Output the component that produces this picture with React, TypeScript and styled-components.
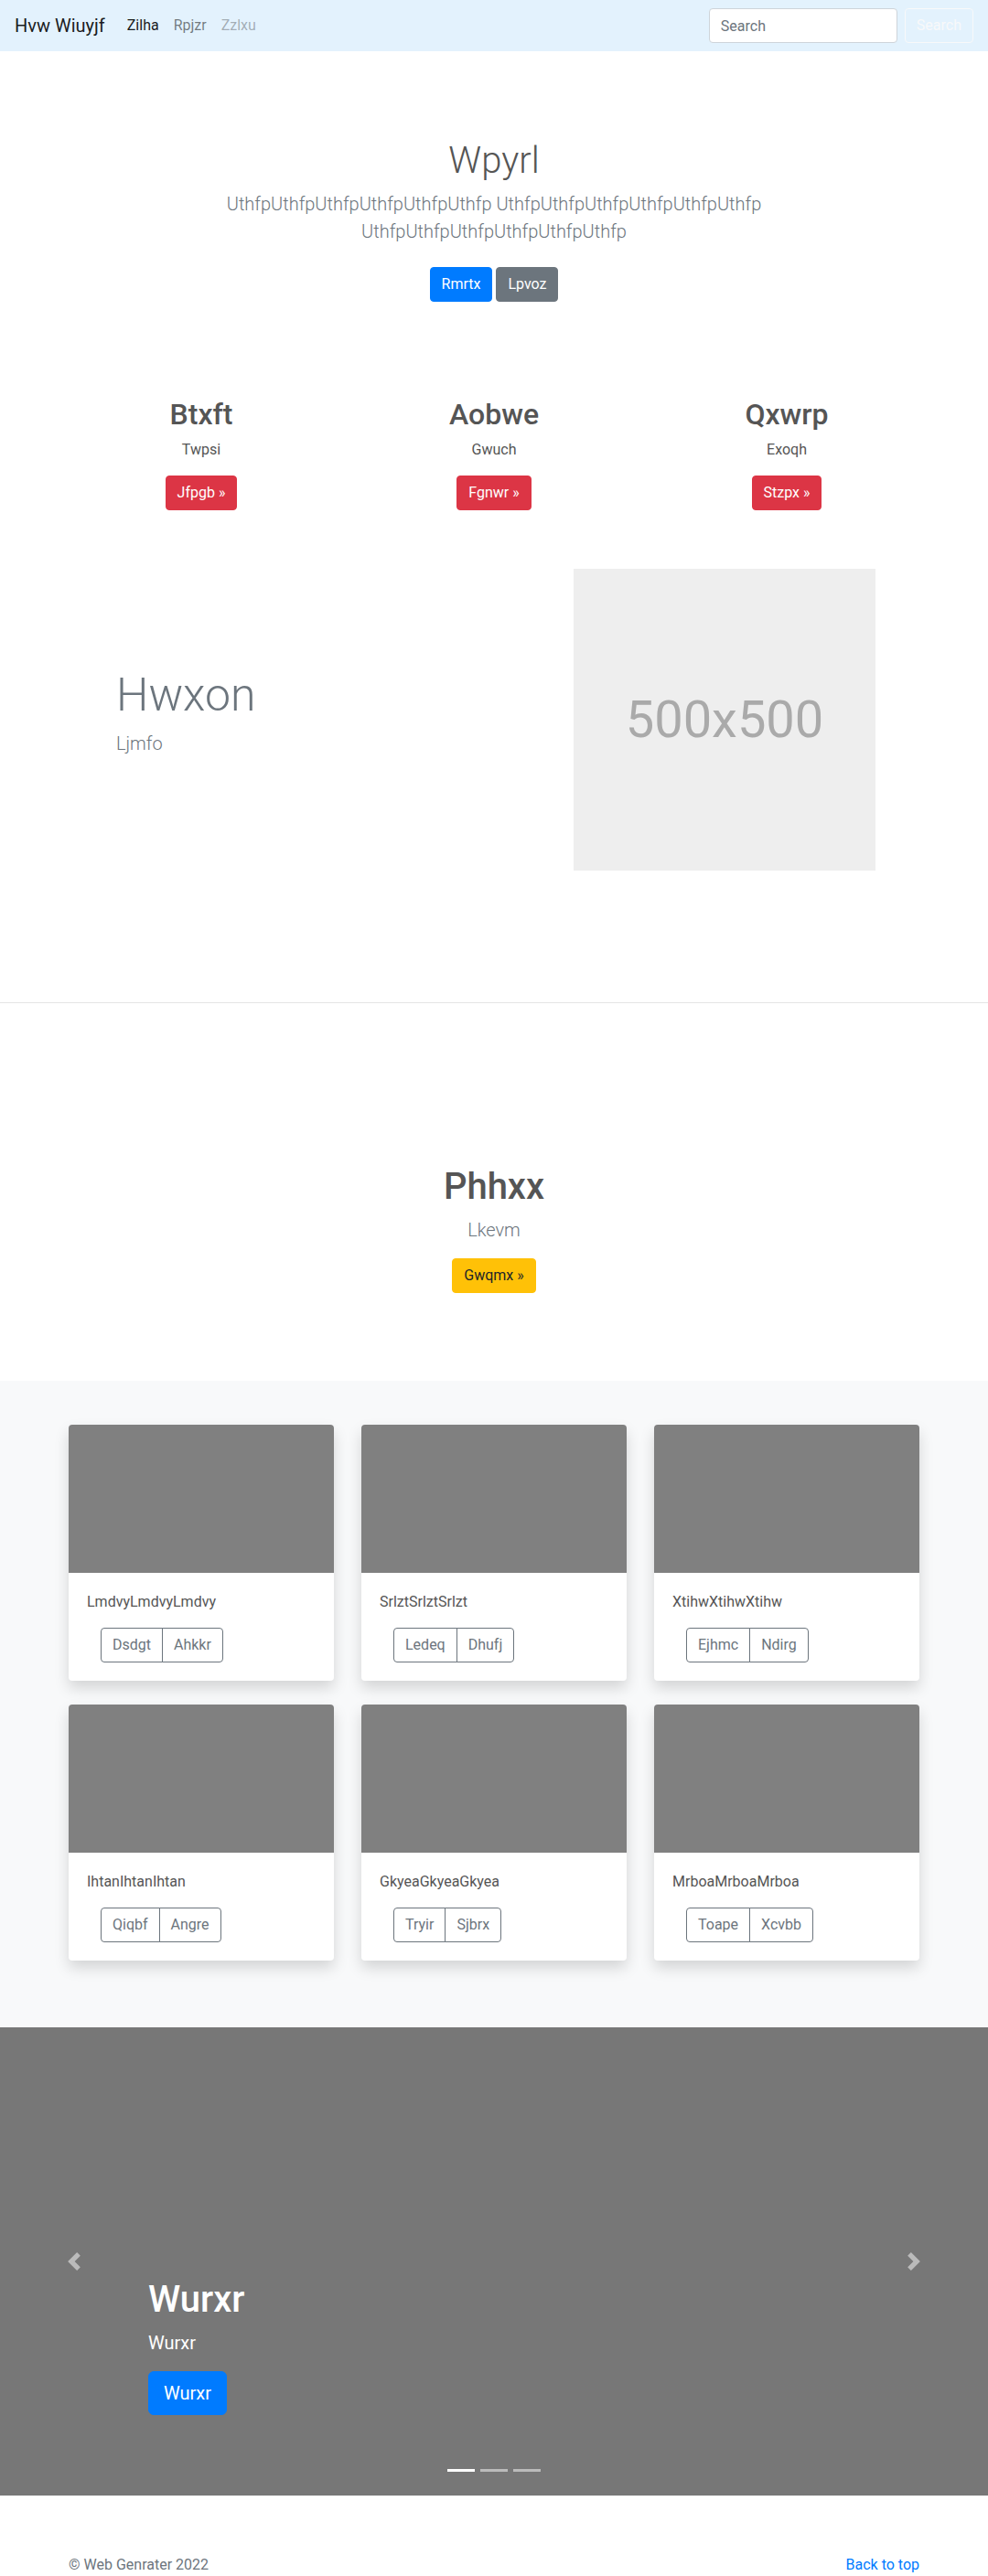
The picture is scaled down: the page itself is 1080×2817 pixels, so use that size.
import React from "react";
import styled, { createGlobalStyle, css } from "styled-components";

const GlobalStyle = createGlobalStyle`
  *, *::before, *::after { box-sizing: border-box; }
  html, body { margin: 0; padding: 0; }
  body {
    font-family: "Segoe UI", Roboto, "Liberation Sans", Arial, sans-serif;
    font-size: 16px;
    line-height: 1.5;
    color: #555555;
    background: #ffffff;
    overflow: hidden;
  }
`;

/* ---------- Navbar ---------- */
const Navbar = styled.nav`
  display: flex;
  align-items: center;
  justify-content: space-between;
  height: 56px;
  padding: 0 16px;
  background: #e3f2fd;
`;

const NavLeft = styled.div`
  display: flex;
  align-items: center;
`;

const Brand = styled.a`
  font-size: 20px;
  line-height: 30px;
  color: rgba(0, 0, 0, 0.9);
  margin-right: 16px;
  text-decoration: none;
`;

const NavLink = styled.a<{ $state: "active" | "normal" | "disabled" }>`
  padding: 8px;
  font-size: 16px;
  line-height: 24px;
  text-decoration: none;
  color: ${({ $state }) =>
    $state === "active"
      ? "rgba(0,0,0,0.9)"
      : $state === "normal"
      ? "rgba(0,0,0,0.5)"
      : "rgba(0,0,0,0.3)"};
`;

const SearchForm = styled.form`
  display: flex;
  align-items: center;
  margin: 0;
`;

const SearchInput = styled.input`
  width: 206px;
  height: 38px;
  padding: 6px 12px;
  margin-right: 8px;
  font-family: inherit;
  font-size: 16px;
  color: #495057;
  background: #ffffff;
  border: 1px solid #ced4da;
  border-radius: 4px;
  &::placeholder { color: #6c757d; }
`;

const OutlineLightButton = styled.button`
  height: 38px;
  padding: 6px 12px;
  font-family: inherit;
  font-size: 16px;
  line-height: 24px;
  color: #f8f9fa;
  background: transparent;
  border: 1px solid #f8f9fa;
  border-radius: 4px;
`;

/* ---------- Buttons ---------- */
type Variant = "primary" | "secondary" | "danger" | "warning";
const variantColors: Record<Variant, { bg: string; fg: string }> = {
  primary: { bg: "#007bff", fg: "#ffffff" },
  secondary: { bg: "#6c757d", fg: "#ffffff" },
  danger: { bg: "#dc3545", fg: "#ffffff" },
  warning: { bg: "#ffc107", fg: "#212529" },
};

const Button = styled.a<{ $variant: Variant; $lg?: boolean }>`
  display: inline-block;
  font-size: 16px;
  line-height: 24px;
  padding: 6px 12px;
  border-radius: 4px;
  border: 1px solid ${({ $variant }) => variantColors[$variant].bg};
  background: ${({ $variant }) => variantColors[$variant].bg};
  color: ${({ $variant }) => variantColors[$variant].fg};
  text-decoration: none;
  vertical-align: middle;
  ${({ $lg }) =>
    $lg &&
    css`
      font-size: 20px;
      line-height: 30px;
      padding: 8px 16px;
      border-radius: 6px;
    `}
`;

/* ---------- Hero ---------- */
const Hero = styled.section`
  padding: 96px 0;
  text-align: center;
`;

const HeroTitle = styled.h1`
  margin: 0 0 8px;
  font-size: 40px;
  line-height: 1.2;
  font-weight: 300;
  color: #555555;
`;

const Lead = styled.p<{ $maxWidth?: number }>`
  margin: 0 auto 16px;
  font-size: 20px;
  line-height: 30px;
  font-weight: 300;
  color: #6c757d;
  max-width: ${({ $maxWidth }) => ($maxWidth ? `${$maxWidth}px` : "none")};
`;

const ButtonRow = styled.div`
  display: flex;
  justify-content: center;
  gap: 4px;
  padding: 8px 0;
`;

/* ---------- Columns ---------- */
const Container = styled.div`
  width: 960px;
  margin: 0 auto;
  padding: 0 15px;
`;

const ColumnsGrid = styled.div`
  display: grid;
  grid-template-columns: repeat(3, 1fr);
  column-gap: 30px;
  text-align: center;
`;

const ColumnTitle = styled.h2`
  margin: 0 0 8px;
  font-size: 32px;
  line-height: 1.2;
  font-weight: 500;
  color: #555555;
`;

const Para = styled.p`
  margin: 0 0 16px;
`;

/* ---------- Featurette ---------- */
const Featurette = styled.section`
  width: 960px;
  margin: 0 auto;
  padding: 48px 63px 144px 67px;
  display: grid;
  grid-template-columns: 1fr 330px;
  align-items: center;
`;

const FeatureText = styled.div``;

const FeatureTitle = styled.h2`
  margin: 0 0 8px;
  font-size: 50px;
  line-height: 1.2;
  font-weight: 300;
  color: #6c757d;
`;

const Placeholder = styled.div`
  width: 330px;
  height: 330px;
  background: #eeeeee;
  color: #aaaaaa;
  font-size: 56px;
  display: flex;
  align-items: center;
  justify-content: center;
`;

const Divider = styled.hr`
  margin: 0;
  border: 0;
  border-top: 1px solid #e5e5e5;
`;

/* ---------- Callout ---------- */
const Callout = styled.section`
  padding: 177px 0 80px;
  text-align: center;
`;

const CalloutTitle = styled.h1`
  margin: 0 0 8px;
  font-size: 40px;
  line-height: 1.2;
  font-weight: 500;
  color: #555555;
`;

/* ---------- Album ---------- */
const Album = styled.section`
  background: #f8f9fa;
  padding: 48px 0 73px;
`;

const CardGrid = styled.div`
  display: grid;
  grid-template-columns: repeat(3, 1fr);
  column-gap: 30px;
  row-gap: 26px;
`;

const Card = styled.div`
  background: #ffffff;
  border-radius: 4px;
  overflow: hidden;
  box-shadow: 0 8px 16px rgba(0, 0, 0, 0.15);
`;

const CardImage = styled.div`
  height: 162px;
  background: #808080;
`;

const CardBody = styled.div`
  padding: 20px;
`;

const CardText = styled.p`
  margin: 0 0 16px;
  color: #555555;
`;

const BtnGroup = styled.div`
  display: inline-flex;
  margin-left: 15px;
`;

const GroupButton = styled.button`
  font-family: inherit;
  font-size: 16px;
  line-height: 24px;
  padding: 6px 12px;
  color: #6c757d;
  background: transparent;
  border: 1px solid #6c757d;
  border-radius: 0;
  &:first-child { border-radius: 4px 0 0 4px; }
  &:last-child { border-radius: 0 4px 4px 0; margin-left: -1px; }
`;

/* ---------- Carousel ---------- */
const Carousel = styled.section`
  position: relative;
  height: 512px;
  background: #777777;
  overflow: hidden;
`;

const Caption = styled.div`
  position: absolute;
  left: 15%;
  right: 15%;
  bottom: 72px;
  display: flex;
  flex-direction: column;
  align-items: flex-start;
  color: #ffffff;
  z-index: 2;
`;

const CaptionTitle = styled.h1`
  margin: 0 0 8px;
  font-size: 40px;
  line-height: 1.2;
  font-weight: 500;
  color: #ffffff;
`;

const CaptionText = styled.p`
  margin: 0 0 16px;
  font-size: 20px;
  line-height: 30px;
`;

const CaptionAction = styled.div`
  margin-bottom: 16px;
`;

const Control = styled.a<{ $side: "left" | "right" }>`
  position: absolute;
  top: 0;
  bottom: 0;
  ${({ $side }) => ($side === "left" ? "left: 0;" : "right: 0;")}
  width: 15%;
  display: flex;
  align-items: center;
  justify-content: center;
  opacity: 0.5;
  z-index: 1;
`;

const Indicators = styled.ol`
  position: absolute;
  left: 0;
  right: 0;
  bottom: 26px;
  margin: 0;
  padding: 0;
  list-style: none;
  display: flex;
  justify-content: center;
  z-index: 3;
`;

const Indicator = styled.li<{ $active?: boolean }>`
  width: 30px;
  height: 3px;
  margin: 0 3px;
  background: #ffffff;
  opacity: ${({ $active }) => ($active ? 1 : 0.5)};
`;

/* ---------- Footer ---------- */
const Footer = styled.footer`
  width: 960px;
  margin: 0 auto;
  padding: 64px 15px 0;
  display: flex;
  justify-content: space-between;
`;

const FooterText = styled.p`
  margin: 0;
  color: #6c757d;
`;

const FooterLink = styled.a`
  color: #007bff;
  text-decoration: none;
`;

const cards = [
  { text: "LmdvyLmdvyLmdvy", a: "Dsdgt", b: "Ahkkr" },
  { text: "SrlztSrlztSrlzt", a: "Ledeq", b: "Dhufj" },
  { text: "XtihwXtihwXtihw", a: "Ejhmc", b: "Ndirg" },
  { text: "IhtanIhtanIhtan", a: "Qiqbf", b: "Angre" },
  { text: "GkyeaGkyeaGkyea", a: "Tryir", b: "Sjbrx" },
  { text: "MrboaMrboaMrboa", a: "Toape", b: "Xcvbb" },
];

const columns = [
  { title: "Btxft", text: "Twpsi", btn: "Jfpgb »" },
  { title: "Aobwe", text: "Gwuch", btn: "Fgnwr »" },
  { title: "Qxwrp", text: "Exoqh", btn: "Stzpx »" },
];

const Chevron = ({ dir }: { dir: "prev" | "next" }) => (
  <svg width="20" height="20" viewBox="0 0 8 8" fill="#ffffff">
    {dir === "prev" ? (
      <path d="M5.25 0l-4 4 4 4 1.5-1.5L4.25 4l2.5-2.5L5.25 0z" />
    ) : (
      <path d="M2.75 0l-1.5 1.5L3.75 4l-2.5 2.5L2.75 8l4-4-4-4z" />
    )}
  </svg>
);

export default function App() {
  return (
    <>
      <GlobalStyle />
      <Navbar>
        <NavLeft>
          <Brand href="#">Hvw Wiuyjf</Brand>
          <NavLink $state="active" href="#">Zilha</NavLink>
          <NavLink $state="normal" href="#">Rpjzr</NavLink>
          <NavLink $state="disabled" href="#">Zzlxu</NavLink>
        </NavLeft>
        <SearchForm onSubmit={(e) => e.preventDefault()}>
          <SearchInput type="search" placeholder="Search" />
          <OutlineLightButton type="submit">Search</OutlineLightButton>
        </SearchForm>
      </Navbar>

      <Hero>
        <HeroTitle>Wpyrl</HeroTitle>
        <Lead $maxWidth={640}>
          UthfpUthfpUthfpUthfpUthfpUthfp UthfpUthfpUthfpUthfpUthfpUthfp UthfpUthfpUthfpUthfpUthfpUthfp
        </Lead>
        <ButtonRow>
          <Button $variant="primary" href="#">Rmrtx</Button>
          <Button $variant="secondary" href="#">Lpvoz</Button>
        </ButtonRow>
      </Hero>

      <Container>
        <ColumnsGrid>
          {columns.map((c) => (
            <div key={c.title}>
              <ColumnTitle>{c.title}</ColumnTitle>
              <Para>{c.text}</Para>
              <Para>
                <Button $variant="danger" href="#">{c.btn}</Button>
              </Para>
            </div>
          ))}
        </ColumnsGrid>
      </Container>

      <Featurette>
        <FeatureText>
          <FeatureTitle>Hwxon</FeatureTitle>
          <Lead>Ljmfo</Lead>
        </FeatureText>
        <Placeholder>500x500</Placeholder>
      </Featurette>

      <Divider />

      <Callout>
        <CalloutTitle>Phhxx</CalloutTitle>
        <Lead>Lkevm</Lead>
        <Para>
          <Button $variant="warning" href="#">Gwqmx »</Button>
        </Para>
      </Callout>

      <Album>
        <Container>
          <CardGrid>
            {cards.map((c) => (
              <Card key={c.text}>
                <CardImage />
                <CardBody>
                  <CardText>{c.text}</CardText>
                  <BtnGroup>
                    <GroupButton type="button">{c.a}</GroupButton>
                    <GroupButton type="button">{c.b}</GroupButton>
                  </BtnGroup>
                </CardBody>
              </Card>
            ))}
          </CardGrid>
        </Container>
      </Album>

      <Carousel>
        <Control $side="left" href="#">
          <Chevron dir="prev" />
        </Control>
        <Caption>
          <CaptionTitle>Wurxr</CaptionTitle>
          <CaptionText>Wurxr</CaptionText>
          <CaptionAction>
            <Button $variant="primary" $lg href="#">Wurxr</Button>
          </CaptionAction>
        </Caption>
        <Control $side="right" href="#">
          <Chevron dir="next" />
        </Control>
        <Indicators>
          <Indicator $active />
          <Indicator />
          <Indicator />
        </Indicators>
      </Carousel>

      <Footer>
        <FooterText>© Web Genrater 2022</FooterText>
        <FooterLink href="#">Back to top</FooterLink>
      </Footer>
    </>
  );
}
